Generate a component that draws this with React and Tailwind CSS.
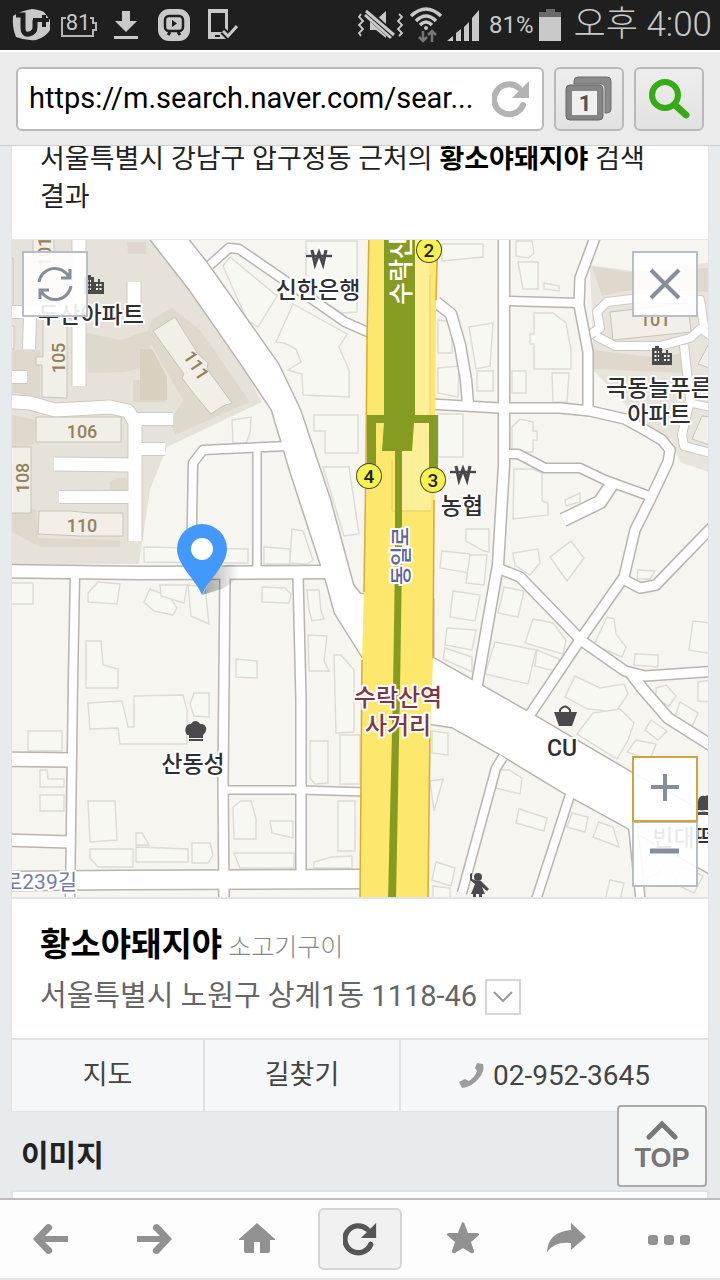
const STREETS = [
  { d: 'M210 265L229 248L239 249L290 284L345 322L370 333', w: 8 },
  { d: 'M191 572L193 463L203 450L287 446', w: 8 },
  { d: 'M257 450V572', w: 7 },
  { d: 'M0 571L140 573L330 572', w: 12 },
  { d: 'M75 575L73 680L70 900', w: 8 },
  { d: 'M225 575L223 780L224 900', w: 9 },
  { d: 'M298 575L301 700L301 875', w: 9 },
  { d: 'M224 790H300L366 792', w: 7 },
  { d: 'M0 759L71 760', w: 13 },
  { d: 'M0 840L70 842', w: 11 },
  { d: 'M0 881L120 880L366 879', w: 18 },
  { d: 'M504 235V400V465L498 565L476 690', w: 10 },
  { d: 'M505 301L578 303', w: 8 },
  { d: 'M596 235L580 278L579 305L588 352V409', w: 9 },
  { d: 'M430 404L500 408L560 408L590 411L625 419L645 430L662 440L670 450L668 462L650 500L635 530L624 577L580 640L525 722', w: 9 },
  { d: 'M436 302L451 314L460 345L466 380L468 404', w: 10 },
  { d: 'M505 454H518L545 468H580L605 480L652 497', w: 8 },
  { d: 'M612 484L600 502L563 520', w: 12 },
  { d: 'M500 569L520 577L582 641L625 671L645 676L720 671', w: 9 },
  { d: 'M623 579L640 588L656 585L680 560L714 525', w: 9 },
  { d: 'M630 672L642 688L668 718L714 747', w: 10 },
  { d: 'M503 757L496 768L462 893', w: 8 },
  { d: 'M570 795L536 900', w: 8 },
  { d: 'M633 824L641 905', w: 8 },
]

const AVENUE =
  'M145 232L190 290L240 362L272 410L282 443L290 470L321 565L326 580L335 613L372 672V723L432 724L452 727L500 754L566 794L628 828L725 882V824L632 773L528 712L433 658V600L360 594L353 585L330 500L320 470L300 410L278 364L206 262L182 232Z'

const COMPLEX_LANES = [
  { d: 'M0 401L30 403L55 410L110 407L128 411L135 422V541', w: 13 },
  { d: 'M135 419H173', w: 12 },
  { d: 'M135 449H165', w: 12 },
  { d: 'M54 464L135 465', w: 13 },
  { d: 'M59 497H135', w: 12 },
  { d: 'M79 235V386', w: 13 },
  { d: 'M0 312H79', w: 12 },
  { d: 'M30 316L29 349', w: 12 },
  { d: 'M0 377H27', w: 12 },
  { d: 'M134 282V304', w: 13 },
  { d: 'M588 336L600 328L597 312L607 302L640 298L700 300L704 326L690 338L660 346L615 346L596 336', w: 8 },
  { d: 'M684 345L690 400L682 435L684 446L714 454', w: 8 },
  { d: 'M703 330L714 338', w: 8 },
  { d: 'M690 403L714 408', w: 7 },
]

const COMPLEX_BUILDINGS = [
  'M33 235H54V262H33Z',
  'M43 318H67V398L42 397V365H36V357H43Z',
  'M36 417H121V442H36Z',
  'M5 447H31V513H5Z',
  'M39 511H70L90 513H123V536H80L38 534Z',
  'M153 331L175 317L198 354L208 363L207 369L232 403L223 406L211 414L194 394L182 378L184 374Z',
  'M610 312L688 303L691 332L613 340Z',
  'M712 338L698 364L712 369Z',
  'M712 417L702 416L692 439L712 446Z',
  'M5 326H14V349H5Z',
  'M5 258H13V304H5Z',
]

const BUILDINGS = [
  'M306 241H357V312L342 313L306 290Z',
  'M223 266L230 257L277 296L258 327L247 320Z',
  'M293 304L347 334L339 347L349 370V397L303 395L302 374L288 370L301 362L296 349L284 343L276 342Z',
  'M232 420L251 417L250 433L246 443L233 443Z',
  'M314 415H358V453H325V431H314Z',
  'M323 467H349L359 534L344 536Z',
  'M144 547L248 549V563L144 562Z',
  'M264 547L290 549V564H264Z',
  'M292 529L303 531L313 560L307 564L290 563Z',
  'M5 583H33V604H5Z',
  'M88 593L98 582L120 584L117 604L88 602Z',
  'M150 589L170 597L177 608L173 615L154 611L144 602Z',
  'M160 585H187L184 603L161 596Z',
  'M188 585L205 587L209 624L191 616Z',
  'M86 641H101L103 665L118 669V688H86Z',
  'M262 587L285 588L291 594L289 603L262 602Z',
  'M236 659L257 661V678L236 677Z',
  'M307 590H319L321 611L324 619L312 621L309 610Z',
  'M308 635L327 636L324 661L329 671H309Z',
  'M334 655H341L354 670V732L336 733Z',
  'M88 703L122 701L128 727H134V696L183 695L187 710V744H120L118 728L90 729Z',
  'M194 693H209V717L194 716L190 704Z',
  'M28 731H62V751H28Z',
  'M40 770H47L48 779H64V787H40Z',
  'M40 795H64V811H40Z',
  'M88 801H115L117 840L90 842Z',
  'M136 833H142L149 845H136Z',
  'M136 847L188 849V862H136Z',
  'M90 849H133V867H98L90 858Z',
  'M192 843H210L213 855L208 863H192Z',
  'M233 807L241 801H251L256 818V839H234Z',
  'M270 821H293V838L272 833Z',
  'M234 853H294V868H240Z',
  'M310 741H328V783L315 784L310 778Z',
  'M340 735H360V784H340Z',
  'M338 801H355V851H338Z',
  'M314 862L332 857L352 856V868H314Z',
  'M442 244H483V257L442 261Z',
  'M516 241H532L534 253L528 258L516 256Z',
  'M518 262H538V289H523Z',
  'M544 283L559 286V291L544 289Z',
  'M469 327L493 323L490 366L476 369Z',
  'M477 371H493V391H477Z',
  'M438 320L452 322V353H438Z',
  'M438 368L459 366L458 397L438 393Z',
  'M534 313H553L566 323L571 350V369H534V344H530V334H534Z',
  'M512 371H526V393H512Z',
  'M552 373H569L567 402H553Z',
  'M512 427L520 419L533 422V431H537V440H533V452H512Z',
  'M438 414H463V457H438Z',
  'M514 469H533L542 473V501L548 503V515L513 519Z',
  'M466 529H489V552L484 551L466 541Z',
  'M442 551L470 554V573L440 568Z',
  'M470 555H487L484 585L466 583Z',
  'M513 553L538 549L540 563L530 575L515 565Z',
  'M550 557L571 541L584 558L567 581Z',
  'M453 591L480 595L475 621L450 617Z',
  'M504 587L524 591L518 617L498 613Z',
  'M447 628L476 630L472 650L445 645Z',
  'M445 648L472 657V672L443 659Z',
  'M533 619L553 623L566 640L563 654L525 643Z',
  'M495 642L536 650L528 684L485 674Z',
  'M537 650L559 659V672L535 666Z',
  'M565 500L580 493V502L566 506Z',
  'M607 617L614 619L616 634L626 647L622 657L594 645Z',
  'M635 654L658 655V667L634 665Z',
  'M693 621L712 623V654L689 650Z',
  'M638 570L655 571L650 579H637Z',
  'M575 676L600 688L624 684L628 694L615 713L600 710L588 709L565 697Z',
  'M593 713L620 709L634 723L628 740L617 759L577 734Z',
  'M656 688L666 685L676 696L669 706L656 698Z',
  'M680 702L698 713L692 727L675 717Z',
  'M651 720L667 731L658 740L645 730Z',
  'M636 740L656 744L650 760L627 752Z',
  'M698 682L712 680V702L698 701Z',
  'M432 731L448 733V755L432 753Z',
  'M430 781L443 779L434 811Z',
  'M499 770L509 770L522 778L520 794L496 788Z',
  'M519 809L547 818L544 831L516 823Z',
  'M572 813L588 817L585 832L567 827Z',
  'M599 822L613 827L619 847L593 837Z',
  'M436 862L455 868L451 886L432 880Z',
  'M433 886L450 888V900H433Z',
  'M610 880L624 883L620 900H605Z',
  'M647 842L670 850L660 872L645 880Z',
  'M683 866L703 876L694 893L675 884Z',
]

const POI_LABELS = [
  { x: 91, y: 323, text: '두산아파트' },
  { x: 318, y: 298, text: '신한은행' },
  { x: 659, y: 396, text: '극동늘푸른' },
  { x: 659, y: 423, text: '아파트' },
  { x: 462, y: 514, text: '농협' },
  { x: 193, y: 772, text: '산동성' },
  { x: 562, y: 756, text: 'CU' },
  { x: 684, y: 846, text: '빈대떡' },
]

const BLOCK_NUMBERS = [
  { x: 82, y: 438, text: '106' },
  { x: 82, y: 532, text: '110' },
  { x: 655, y: 326, text: '101' },
  { x: 65, y: 358, text: '105', r: -90 },
  { x: 29, y: 478, text: '108', r: -90 },
  { x: 51, y: 252, text: '101', r: -90 },
  { x: 191, y: 369, text: '111', r: 56 },
]

const EXITS = [
  { x: 429, y: 250, n: 2 },
  { x: 369, y: 476, n: 4 },
  { x: 433, y: 480, n: 3 },
]

const FONT = "font-['Roboto','Noto_Sans_CJK_KR',sans-serif]"

function Lines({ items, color, extra = 0 }) {
  return items.map((s) => (
    <path key={s.d} d={s.d} fill="none" stroke={color} strokeWidth={s.w + extra} strokeLinejoin="round" />
  ))
}

function ApartmentIcon({ x, y }) {
  return (
    <g transform={`translate(${x} ${y})`}>
      <path d="M0 2H3V0H7V2H10V7H14V4H16V7H20V19H0Z" fill="#4a4a4c" />
      <path d="M2.5 6H7M2.5 10H7M2.5 14H7M12 10H17.500M12 14H17.500" stroke="#fff" strokeWidth="2" strokeDasharray="2 1.500" />
    </g>
  )
}

function WonIcon({ x, y }) {
  return (
    <g transform={`translate(${x} ${y})`} fill="none">
      <path d="M5 1L9 14L13 3L17 14L21 1" stroke="#fff" strokeWidth="6" />
      <path d="M6 0L9 14L13 3L17 14L20 0" stroke="#4a4a4c" strokeWidth="3.200" />
      <path d="M0 6H26" stroke="#4a4a4c" strokeWidth="2.400" />
    </g>
  )
}

function MapCanvas() {
  return (
    <svg viewBox="12 240 696 657" preserveAspectRatio="xMidYMid slice" className="block size-full" role="img" aria-label="지도">
      <rect x="0" y="230" width="730" height="680" fill="#f6f5f0" />

      {/* apartment complexes */}
      <path d="M0 230H145L190 290L240 362L262 402L167 447L150 490L139 564H0Z" fill="#e6e2d9" />
      <path d="M590 265L640 272L712 262V473L680 462L672 440L640 420L594 371Z" fill="#e8e4dc" />
      <g fill="#dfd9cd">
        <path d="M86 333L120 340L150 330V365L125 372L88 373ZM152 320L172 308L200 330L250 402L175 435L170 422L183 400L160 360L146 335Z" />
        <path d="M12 505L36 510L38 538L120 540V547H40L12 532ZM127 242H146V254H128ZM12 350H40V398L12 392ZM133 380H165V402H133ZM12 415L36 420L34 445L12 447ZM118 478H127V492H110V482Z" />
        <path d="M594 350L660 358L686 352V373L594 369ZM592 266L632 273V290L602 296ZM622 272L708 268V292L640 290Z" />
      </g>
      <path d="M140 349H152L167 377V400H140Z" fill="#d9d1bf" />
      <Lines items={COMPLEX_LANES} color="#cfcac0" extra={2} />
      <Lines items={COMPLEX_LANES} color="#fff" />
      {COMPLEX_BUILDINGS.map((d) => (
        <path key={d} d={d} fill="#f1efe7" stroke="#c9c4b8" />
      ))}

      {BUILDINGS.map((d) => (
        <path key={d} d={d} fill="#f8f8f3" stroke="#dcdcd5" strokeWidth="1.400" />
      ))}

      {/* streets: casings first so that crossings stay open */}
      <Lines items={STREETS} color="#b9b4ae" extra={3} />
      <path d={AVENUE} fill="none" stroke="#b9b4ae" strokeWidth="3" />
      <Lines items={STREETS} color="#fff" />
      <path d={AVENUE} fill="#fff" />

      {/* Dongil-ro and the subway line */}
      <path d="M369 230H438L436 300L435 460L433 658L430 740L428 900H360L362 660L364 590L367 460L367 340Z" fill="#fde76c" />
      <path d="M369 230L367 340L366 460L364 592M362 660L360 900M438 230L436 300M434 500L433 658M430 730L428 900" fill="none" stroke="#dba936" strokeWidth="1.500" />
      <path d="M415 230H429L430 415H415ZM414 423H429L431 511H392V451H412Z" fill="#fdef98" />
      <path d="M377 423H384L382 451H395V511H392L376 470Z" fill="#fde76c" />
      <path d="M430 275V415M392 460V511H431" fill="none" stroke="#e3cf6b" />
      <path d="M384 230H415V415H438V475H429V423H414L412 451H402V560L400 690L396 900H388L393 690L395 560V451H382L384 423H376V470H367V415H384Z" fill="#869b22" />

      <g fill="#4a4a4c">
        <path d="M187 735C183 729 187 723 191 724C193 720 198 720 200 724C206 723 209 730 203 735V738H189V735ZM189 739H203V741H189Z" />
        <path d="M554 712H577L572 726H559Z" />
        <path d="M560 714V710Q565 703 570 710V714" fill="none" stroke="#4a4a4c" strokeWidth="2" />
        <circle cx="478" cy="877" r="4" />
        <path d="M470 874L472 873V879L477 881H481L489 889L487 891L482 887L485 894H482V900H479V894H476V900H473V894H471L475 884L470 880Z" />
        <path d="M698 810V801Q699 795 705 796L712 794V810ZM698 812H712V815H698Z" />
      </g>
      <ApartmentIcon x={84} y={275} />
      <ApartmentIcon x={652} y={346} />
      <WonIcon x={306} y={250} />
      <WonIcon x={450} y={466} />

      <g className="font-['Roboto','Noto_Sans_CJK_KR',sans-serif] font-medium" textAnchor="middle" strokeLinejoin="round" paintOrder="stroke">
        <g fontSize="18" fill="#93835c">
          {BLOCK_NUMBERS.map((b) => (
            <text key={`${b.text}-${b.x}`} transform={`translate(${b.x} ${b.y}) rotate(${b.r || 0})`}>{b.text}</text>
          ))}
        </g>
        <g fontSize="23" fill="#2f2f31" stroke="#fff" strokeWidth="4">
          {POI_LABELS.map((l) => (
            <text key={l.text + l.y} x={l.x} y={l.y}>{l.text}</text>
          ))}
        </g>
        <text fontSize="25" fill="#fff" transform="translate(410 305) rotate(-90)" textAnchor="start">수락산</text>
        <text fontSize="21" fill="#5d62a0" stroke="#fff" strokeWidth="4" transform="translate(408 556) rotate(-90)">동일로</text>
        <text fontSize="21" fill="#777aa6" stroke="#fff" strokeWidth="4" x="77" y="889" textAnchor="end" className="font-normal">로239길</text>
        <g fontSize="24" fill="#7e3548" stroke="#fff" strokeWidth="4">
          <text x="398" y="706">수락산역</text>
          <text x="398" y="734">사거리</text>
        </g>
        {EXITS.map((e) => (
          <g key={e.n}>
            <circle cx={e.x} cy={e.y} r="12" fill="#f7f253" stroke="#4d4a1c" strokeWidth="2" />
            <text x={e.x} y={e.y + 7} fontSize="19" fill="#222">{e.n}</text>
          </g>
        ))}
      </g>

      <defs>
        <linearGradient id="pin-shadow">
          <stop offset="0" stopColor="#000" stopOpacity=".35" />
          <stop offset="1" stopColor="#000" stopOpacity="0" />
        </linearGradient>
      </defs>
      <path d="M202 595L216 570Q230 560 240 568Q240 580 222 589Z" fill="url(#pin-shadow)" />
      <path d="M202 595C196 580 177 565 177 549A25 25 0 0 1 227 549C227 565 208 580 202 595Z" fill="#4399fb" />
      <circle cx="202" cy="549" r="11" fill="#fff" />
    </svg>
  )
}

function StatusBar() {
  return (
    <div className="flex h-[50px] shrink-0 items-center justify-between bg-[#1f1f1f] pr-2 pl-3 text-[#c9c9c9]">
      <div className="flex items-center">
        <svg width="38" height="34" viewBox="0 0 38 34">
          <path d="M1 8Q8 3 20 1Q28 2 32 4L38 12V22Q34 29 24 32Q14 33 4 29Q0 20 1 8Z" fill="#c9c9c9" />
          <path d="M4 7H11V20Q11 27 17 26Q23 25 23 19V12" fill="none" stroke="#1f1f1f" strokeWidth="5" />
          <path d="M21 12H26M32 7V19M26 12H37" fill="none" stroke="#1f1f1f" strokeWidth="4" />
        </svg>
        <svg className="ml-2.5" width="38" height="30" viewBox="0 0 38 30" fill="none" stroke="#b5b5b5" strokeWidth="2">
          <path d="M6 8H2V26H33V20H36V13H33V8H30" />
          <text x="18" y="20" fontSize="22" textAnchor="middle" fill="#c9c9c9" stroke="none">81</text>
        </svg>
        <svg className="ml-4" width="24" height="30" viewBox="0 0 24 30" fill="#c9c9c9">
          <path d="M8 1H16V11H23L12 22L1 11H8ZM0 26H24V29H0Z" />
        </svg>
        <svg className="ml-5" width="32" height="32" viewBox="0 0 32 32">
          <rect width="32" height="32" rx="11" fill="#c9c9c9" />
          <rect x="7" y="7" width="18" height="15" rx="4" fill="none" stroke="#1f1f1f" strokeWidth="2.500" />
          <path d="M14 11L19 14.500L14 18Z" fill="#1f1f1f" />
          <path d="M12 23L10 26M20 23L22 26" stroke="#1f1f1f" strokeWidth="3" />
        </svg>
        <svg className="ml-[18px]" width="30" height="32" viewBox="0 0 30 32">
          <path d="M0 0H20V22L16 26L19 30H0Z" fill="#c9c9c9" />
          <path d="M3 4H17V23H3Z" fill="#1f1f1f" />
          <path d="M7 27H12" stroke="#1f1f1f" strokeWidth="2" />
          <path d="M15 22L20 27L29 17" fill="none" stroke="#1f1f1f" strokeWidth="7" />
          <path d="M15 22L20 27L29 17" fill="none" stroke="#c9c9c9" strokeWidth="3" />
        </svg>
      </div>

      <div className="flex items-center">
        <svg width="48" height="32" viewBox="0 0 48 32" fill="none" stroke="#c9c9c9">
          <path d="M13 11H19L29 2V29L19 21H13Z" fill="#c9c9c9" stroke="none" />
          <path d="M4 5L2 8L6 12L2 16L6 20L2 24L4 27M42 5L45 8L41 12L45 16L41 20L45 24L42 27" strokeWidth="1.800" />
          <path d="M9 3L37 28" stroke="#1f1f1f" strokeWidth="9" />
          <path d="M9 2L37 26M8 6L34 29" strokeWidth="3" />
        </svg>
        <svg className="ml-1" width="34" height="36" viewBox="0 0 34 36" fill="none" stroke="#c9c9c9" strokeWidth="3.500">
          <path d="M2 9Q17 -5 32 9M7 14Q17 4 27 14M11 18Q17 12 23 18" />
          <circle cx="17" cy="21" r="2" fill="#c9c9c9" stroke="none" />
          <path d="M14 24V33M10 30L14 34L18 30M23 35V25M19 28L23 24L27 28" stroke="#777" strokeWidth="2.500" />
        </svg>
        <svg className="ml-1" width="34" height="32" viewBox="0 0 34 32" fill="#c9c9c9">
          <path d="M0 32L6 27V32ZM9 24L14 20V32H9ZM17 18L22 13V32H17ZM25 9L32 1V32H25Z" />
        </svg>
        <span className="ml-2 text-2xl">81%</span>
        <svg className="ml-1.5" width="22" height="32" viewBox="0 0 22 32">
          <path d="M7 0H16V3H22V8H0V3H7Z" fill="#6a6a6a" />
          <path d="M0 8H22V32H0Z" fill="#c9c9c9" />
        </svg>
        <span className="ml-3 text-[35px] leading-[50px] font-light">오후 4:00</span>
      </div>
    </div>
  )
}

function ReloadIcon({ size }) {
  return (
    <svg width={size} height={size} viewBox="0 0 38 38">
      <path d="M31 25A15 15 0 1 1 27 8" fill="none" stroke="currentColor" strokeWidth="6" strokeLinecap="round" />
      <path d="M37 1V18H20Z" fill="currentColor" />
    </svg>
  )
}

function AddressBar() {
  const button = 'flex h-16 w-[70px] shrink-0 items-center justify-center rounded-md border-2 border-[#b9b9b9] bg-linear-to-b from-[#ededed] to-[#e2e2e2]'
  return (
    <header className="flex h-24 shrink-0 items-center gap-2.5 border-t-2 border-b border-t-white border-b-[#cfcfcf] bg-[#ebebeb] px-4">
      <div className="flex h-16 min-w-0 flex-1 items-center rounded-md border-2 border-[#b9b9b9] bg-white pr-3 pl-[11px]">
        <input aria-label="주소" defaultValue="https://m.search.naver.com/sear..." className="min-w-0 flex-1 bg-transparent text-[29px] text-black outline-none" />
        <button type="button" aria-label="새로고침" className="text-[#b3b3b3]">
          <ReloadIcon size={38} />
        </button>
      </div>
      <button type="button" aria-label="탭" className={button}>
        <svg width="48" height="46" viewBox="0 0 48 46">
          <path d="M9 8V5Q9 1 13 1H42Q46 1 46 5V33Q46 37 42 37H40V13Q40 8 36 8Z" fill="#8a8a8a" stroke="#6f6f6f" />
          <rect x="1" y="9" width="37" height="35" rx="4" fill="#858585" stroke="#666" />
          <rect x="7" y="15" width="25" height="24" fill="#f0f0f0" />
          <text x="20" y="35" fontSize="22" textAnchor="middle" fill="#555" className="font-['Roboto',sans-serif] font-bold">1</text>
        </svg>
      </button>
      <button type="button" aria-label="검색" className={button}>
        <svg width="42" height="42" viewBox="0 0 42 42" fill="none" stroke="#36ab16">
          <circle cx="17" cy="17" r="13" strokeWidth="6" />
          <path d="M27 27L38 37" strokeWidth="7" strokeLinecap="round" />
        </svg>
      </button>
    </header>
  )
}

function MapPanel() {
  const control = 'absolute flex size-[66px] items-center justify-center border-2 border-[#b9bdc6] bg-white/90 text-[#868d9b]'
  return (
    <div className="relative aspect-[696/657] overflow-hidden">
      <MapCanvas />
      <button type="button" aria-label="지도 새로고침" className={`${control} top-[11px] left-2.5`}>
        <svg width="36" height="36" viewBox="0 0 36 36" fill="none" stroke="currentColor" strokeWidth="3">
          <path d="M2 16A16 16 0 0 1 32 11M34 20A16 16 0 0 1 4 25M33 3V12H24M3 33V24H12" />
        </svg>
      </button>
      <button type="button" aria-label="닫기" className={`${control} top-[11px] right-2.5`}>
        <svg width="32" height="32" viewBox="0 0 32 32" fill="none" stroke="currentColor" strokeWidth="4">
          <path d="M2 2L30 30M30 2L2 30" />
        </svg>
      </button>
      <button type="button" aria-label="축소" className={`${control} right-2.5 bottom-2.5`}>
        <svg width="30" height="30" viewBox="0 0 30 30" stroke="currentColor" strokeWidth="5">
          <path d="M0 12H29" />
        </svg>
      </button>
      <button type="button" aria-label="확대" className="absolute right-2.5 bottom-[75px] flex size-[66px] items-center justify-center border-2 border-[#d2a23c] bg-white/90 text-[#868d9b]">
        <svg width="30" height="30" viewBox="0 0 30 30" stroke="currentColor" strokeWidth="4">
          <path d="M1 13H29M15 0V27" />
        </svg>
      </button>
    </div>
  )
}

function PlaceCard() {
  return (
    <section className="mx-[11px] border border-t-0 border-[#dfe3e5] bg-white">
      <p className="-mt-1.5 border-b border-[#e3e6e8] px-7 pb-[23px] text-[27px] leading-[38px] break-keep text-[#222]">
        서울특별시 강남구 압구정동 근처의 <b className="text-black">황소야돼지야</b> 검색 결과
      </p>
      <MapPanel />
      <div className="border-t-2 border-[#dfe3e5] px-7 pt-[22px] pb-5">
        <div className="flex items-baseline gap-1.5 leading-[48px]">
          <h2 className="text-[33px] font-bold text-black">황소야돼지야</h2>
          <span className="text-[25px] font-light text-[#888]">소고기구이</span>
        </div>
        <div className="flex h-[46px] items-center gap-2 pt-1 text-[29px] text-[#666]">
          <span>서울특별시 노원구 상계1동 1118-46</span>
          <button type="button" aria-label="주소 더보기" className="flex size-9 items-center justify-center border-2 border-[#d6d6d6] bg-white">
            <svg width="20" height="12" viewBox="0 0 20 12" fill="none" stroke="#999" strokeWidth="2">
              <path d="M1 1L10 10L19 1" />
            </svg>
          </button>
        </div>
      </div>
      <div className="grid h-[73px] grid-cols-[193fr_196fr_307fr] divide-x-2 divide-[#dfe3e5] border-t-2 border-[#dfe3e5] bg-[#f6f7f9] text-[27px] text-[#444]">
        <a href="#map" className="flex items-center justify-center">지도</a>
        <a href="#directions" className="flex items-center justify-center">길찾기</a>
        <a href="tel:02-952-3645" className="flex items-center justify-center gap-2 text-[28px]">
          <svg width="26" height="26" viewBox="0 0 26 26" fill="#9c9c9c">
            <path d="M18 0L24 1Q26 8 20 15Q13 24 3 25L0 19L6 16L10 18Q16 14 18 8L16 5Z" />
          </svg>
          02-952-3645
        </a>
      </div>
    </section>
  )
}

const NAV = [
  { label: '뒤로', size: 38, d: 'M36 16V22H13L20 29Q21 32 19 33Q16 35 14 33L1 19L14 5Q16 3 19 5Q21 7 20 9L13 16Z' },
  { label: '앞으로', size: 38, d: 'M2 16V22H25L18 29Q17 32 19 33Q22 35 24 33L37 19L24 5Q22 3 19 5Q17 7 18 9L25 16Z' },
  { label: '홈', size: 38, d: 'M19 3L37 19V20H32V31Q32 33 30 33H22V22H16V33H8Q6 33 6 31V20H1V19Z' },
  { label: '새로고침', active: true },
  { label: '즐겨찾기', size: 38, d: 'M19 2Q20 2 21 5L24 13H33Q37 14 34 16L27 22L30 31Q30 34 27 33L19 28L11 33Q8 34 8 31L11 22L4 16Q1 14 5 13H14L17 5Q18 2 19 2Z' },
  { label: '공유', size: 40, d: 'M25 4L40 18L25 31V24Q9 22 1 33Q2 13 25 11Z' },
  { label: '더보기', size: 44, d: 'M4 18H8Q11 18 11 21V25Q11 28 8 28H4Q1 28 1 25V21Q1 18 4 18ZM20 18H24Q27 18 27 21V25Q27 28 24 28H20Q17 28 17 25V21Q17 18 20 18ZM36 18H40Q43 18 43 21V25Q43 28 40 28H36Q33 28 33 25V21Q33 18 36 18Z' },
]

function BottomNav() {
  return (
    <nav className="flex h-[82px] shrink-0 items-center border-t-2 border-b-2 border-t-[#bdbdbd] border-b-[#e6e6e6] bg-[#fdfdfd]">
      {NAV.map((item) => (
        <div key={item.label} className="flex flex-1 justify-center">
          {item.active ? (
            <button type="button" aria-label={item.label} className="flex h-[62px] w-[84px] items-center justify-center rounded-md border-2 border-[#d5d5d5] bg-[#f1f1f1] text-[#565656]">
              <ReloadIcon size={34} />
            </button>
          ) : (
            <button type="button" aria-label={item.label} className="text-[#919191]">
              <svg width={item.size} height={item.size} viewBox={`0 0 ${item.size} ${item.size}`} fill="currentColor">
                <path d={item.d} />
              </svg>
            </button>
          )}
        </div>
      ))}
    </nav>
  )
}

export default function App() {
  return (
    <div className={`flex h-screen flex-col overflow-hidden bg-[#e7ebee] ${FONT}`}>
      <StatusBar />
      <AddressBar />
      <main className="relative min-h-0 flex-1 overflow-hidden">
        <PlaceCard />
        <h2 className="px-[21px] pt-6 pb-3.5 text-[30px] leading-10 font-bold text-[#222]">이미지</h2>
        <section className="mx-[11px] h-40 border-2 border-[#dfe3e5] bg-white" />
        <button type="button" className="absolute right-[13px] bottom-[11px] flex h-[82px] w-[90px] flex-col items-center justify-center gap-1 rounded border-2 border-[#aaa] bg-[#f5f7f6]/95 text-[#777]">
          <svg width="34" height="20" viewBox="0 0 34 20" fill="none" stroke="currentColor" strokeWidth="5" strokeLinecap="round">
            <path d="M4 17L17 4L30 17" />
          </svg>
          <span className="font-['Liberation_Sans',sans-serif] text-[27px] leading-7 font-bold">TOP</span>
        </button>
      </main>
      <BottomNav />
    </div>
  )
}
